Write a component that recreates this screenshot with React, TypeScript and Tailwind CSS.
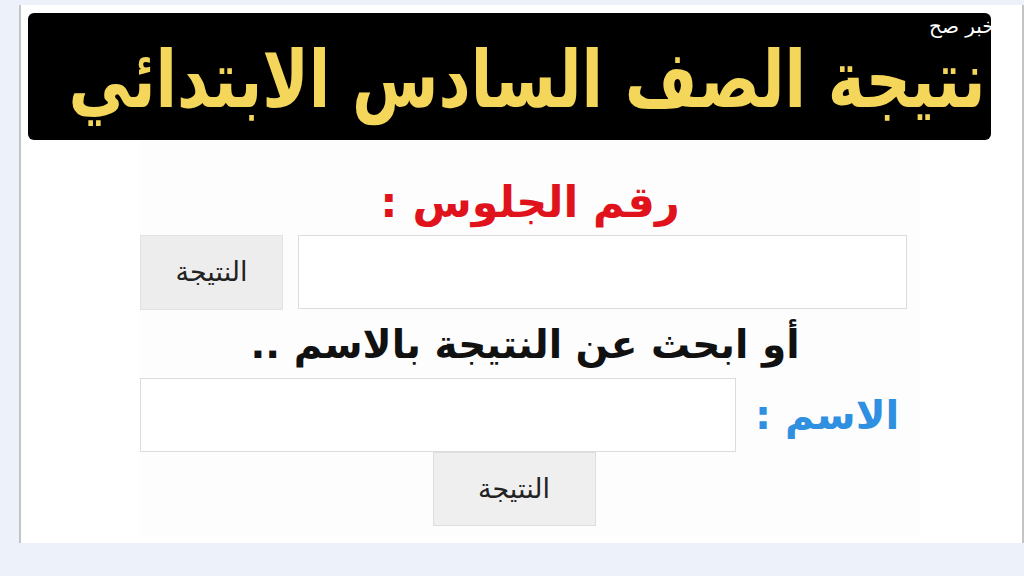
import React from "react";

export default function App() {
  const ar = { fontFamily: '"DejaVu Sans", "Liberation Sans", sans-serif' };
  return (
    <div className="relative w-[1024px] h-[576px] bg-[#edf2fa] overflow-hidden" style={ar}>
      <div className="ml-[19px] pt-[5px]">
        <div className="h-[538px] bg-white border-l-2 border-r-2 border-[#c4c4c4] pt-[8px]">
          <div className="ml-[7px] w-[963px] h-[127px] bg-black rounded-[6px] flex items-center justify-center overflow-visible">
            <span
              dir="rtl"
              className="inline-block whitespace-nowrap text-[#f3d65a] font-bold text-[72px] leading-none scale-x-[0.87] scale-y-[1.1] translate-x-[18px] translate-y-[2px]"
            >
              نتيجة الصف السادس الابتدائي
            </span>
          </div>
          <div className="ml-[119px] w-[780px] h-[395px] bg-[#fdfdfd] flex flex-col items-center">
            <div dir="rtl" className="mt-[30px] h-[65px] text-[#e0121c] font-bold text-[43px] leading-none flex items-center">
              رقم الجلوس :
            </div>
            <div className="w-full flex gap-[15px]">
              <button dir="rtl" className="w-[143px] h-[75px] bg-[#ededed] border border-[#e2e2e2] text-[#222] text-[27px]">
                النتيجة
              </button>
              <div className="w-[609px] h-[74px] bg-white border border-[#dcdcdc]" />
            </div>
            <div dir="rtl" className="h-[68px] text-[#111] font-bold text-[39px] leading-none flex items-center pr-[10px]">
              أو ابحث عن النتيجة بالاسم ..
            </div>
            <div className="w-full flex items-center">
              <div className="w-[596px] h-[74px] bg-white border border-[#dcdcdc]" />
              <div dir="rtl" className="ml-[19px] text-[#2f8fe0] font-bold text-[40px] leading-none">
                الاسم :
              </div>
            </div>
            <button dir="rtl" className="ml-[-32px] w-[163px] h-[74px] bg-[#efefef] border border-[#dedede] text-[#222] text-[27px]">
              النتيجة
            </button>
          </div>
        </div>
      </div>
      <div dir="rtl" className="absolute left-[929px] top-[16px] text-white text-[20px] leading-none">
        خبر صح
      </div>
    </div>
  );
}
